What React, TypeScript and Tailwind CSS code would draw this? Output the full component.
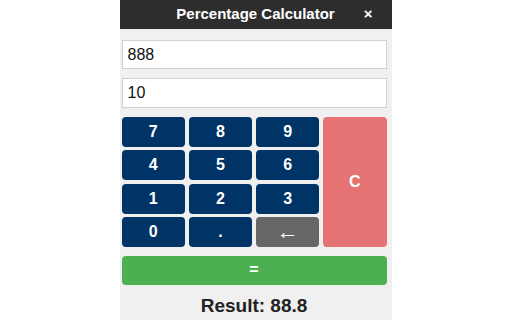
import React from "react";

const keys = ["7", "8", "9", "4", "5", "6", "1", "2", "3", "0", "."];

const App = () => {
  return (
    <div className="w-[512px] h-[320px] bg-white flex justify-center overflow-hidden font-['Liberation_Sans',Arial,sans-serif]">
      <div className="w-[272px] ml-[-1px] bg-[#f0f0f0] flex flex-col">
        <div className="relative h-[29px] bg-[#2d2d2d] flex items-center justify-center text-white font-bold text-[15px]">
          Percentage Calculator
          <span className="absolute right-[19px] top-[6px] text-[15px] leading-[16px]">×</span>
        </div>
        <div className="pl-[2px] pr-[5px] pt-[11px] flex flex-col">
          <input
            className="h-[29px] bg-white border border-[#d0d0d0] px-[5px] text-[16px] text-[#111] outline-none"
            defaultValue="888"
          />
          <input
            className="mt-[9px] h-[30px] bg-white border border-[#d0d0d0] px-[5px] text-[16px] text-[#111] outline-none"
            defaultValue="10"
          />
          <div className="mt-[9px] grid grid-cols-4 grid-rows-[30px_30px_30px_30px] gap-x-[4px] gap-y-[3.3px]">
            {keys.slice(0, 3).map((k) => (
              <button key={k} className="bg-[#003366] text-white font-bold text-[16px] rounded">
                {k}
              </button>
            ))}
            <button className="row-span-4 bg-[#e57373] text-white font-bold text-[16px] rounded">C</button>
            {keys.slice(3).map((k) => (
              <button key={k} className="bg-[#003366] text-white font-bold text-[16px] rounded">
                {k}
              </button>
            ))}
            <button className="bg-[#666666] text-white font-bold text-[22px] leading-none rounded">←</button>
          </div>
          <button className="mt-[9px] h-[29px] bg-[#4caf50] text-white font-bold text-[16px] rounded">=</button>
          <div className="mt-[10px] text-center font-bold text-[19px] text-[#222] leading-[22px]">Result: 88.8</div>
        </div>
      </div>
    </div>
  );
};

export default App;
